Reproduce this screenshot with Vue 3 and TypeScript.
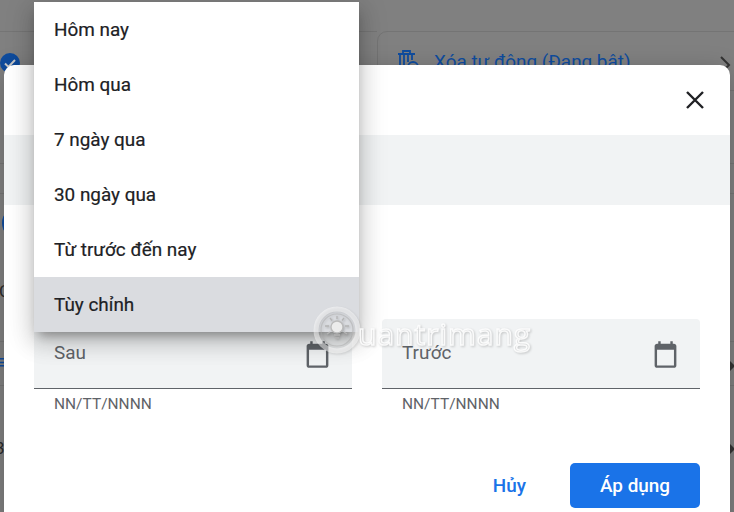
<script setup lang="ts">
const options = [
  { label: 'Hôm nay', active: false },
  { label: 'Hôm qua', active: false },
  { label: '7 ngày qua', active: false },
  { label: '30 ngày qua', active: false },
  { label: 'Từ trước đến nay', active: false },
  { label: 'Tùy chỉnh', active: true },
]
const fields = ['Sau', 'Trước']
</script>

<template>
  <div class="page">
    <div class="backdrop">
      <div class="bg-line l1"></div>
      <div class="bg-line l2"></div>
      <div class="bg-line l3"></div>
      <div class="bg-line l4"></div>
      <div class="bg-line l5"></div>
      <div class="bg-check">
        <svg viewBox="0 0 20 20" width="20" height="20"><circle cx="10" cy="10" r="10" fill="#0f4c9e" /><path d="M5 10.500l3.400 3.400L15 7" fill="none" stroke="#ccc" stroke-width="2" /></svg>
      </div>
      <div class="bg-dot-blue"></div>
      <span class="bg-glyph g1">C</span>
      <span class="bg-glyph g2">≡</span>
      <span class="bg-glyph g3">3</span>
      <span class="bg-tri t1"></span>
      <span class="bg-tri t2"></span>
      <div class="bg-card">
        <svg class="bg-trash" viewBox="0 0 24 24" width="24" height="24" fill="none" stroke="#0f4c9e" stroke-width="1.800"><path d="M2 5h17M7 5V2h7v3M4 5v16h6M8 5v14M12 5v8M16 5v6" /><circle cx="17" cy="18" r="5" /></svg>
        <span class="bg-card-text">Xóa tự động (Đang bật)</span>
        <svg class="bg-chevron" viewBox="0 0 12 20" width="12" height="20" fill="none" stroke="#333" stroke-width="2"><path d="M2 2l8 8-8 8" /></svg>
      </div>
    </div>

    <section class="dialog">
      <header class="dialog-head">
        <svg class="close" viewBox="0 0 20 20" width="20" height="20" fill="none" stroke="#202124" stroke-width="2.400"><path d="M2 2l16 16M18 2L2 18" /></svg>
      </header>
      <div class="dialog-band"></div>
      <div class="fields">
        <div v-for="f in fields" :key="f" class="field">
          <div class="input">
            <span class="input-label">{{ f }}</span>
            <svg viewBox="0 0 24 24" width="29" height="29" fill="#5f6368"><path d="M19 3h-1V1h-2v2H8V1H6v2H5C3.900 3 3 3.900 3 5v16c0 1.100.9 2 2 2h14c1.100 0 2-.9 2-2V5c0-1.100-.9-2-2-2zm0 18H5V8h14v13z" /></svg>
          </div>
          <div class="hint">NN/TT/NNNN</div>
        </div>
      </div>
      <footer class="actions">
        <button class="btn-text">Hủy</button>
        <button class="btn-primary">Áp dụng</button>
      </footer>
    </section>

    <ul class="menu">
      <li v-for="o in options" :key="o.label" class="menu-item" :class="{ active: o.active }">{{ o.label }}</li>
    </ul>

    <div class="watermark">
      <svg viewBox="0 0 48 48" width="48" height="48" fill="none">
        <circle cx="24" cy="24" r="21" stroke="#fff" stroke-opacity=".5" stroke-width="5" />
        <circle cx="24" cy="24" r="16" stroke="#aaa" stroke-opacity=".5" stroke-width="1.200" />
        <circle cx="24" cy="21" r="6" stroke="#bbb" fill="#ececec" stroke-width="1.300" />
        <path d="M21 29h6M22 32h4M24 10v3M31 12l-2 2.500M17 12l2 2.500M36 20h-4M12 20h4M34 28l-3-2M14 28l3-2" stroke="#b4b4b4" stroke-width="1.300" />
      </svg>
      <span class="wm-text">uantrimang</span>
    </div>
  </div>
</template>

<style>
html, body { margin: 0; background: #808080; overflow: hidden; }
</style>

<style scoped>
.page {
  position: relative;
  width: 734px;
  height: 512px;
  overflow: hidden;
  font-family: Roboto, "Noto Sans", sans-serif;
  background: #808080;
}
.backdrop { position: absolute; inset: 0; }
.bg-line { position: absolute; left: 0; width: 734px; height: 1px; background: #757575; }
.l1 { top: 31px; width: 377px; }
.l2 { top: 163px; }
.l3 { top: 193px; }
.l4 { top: 341px; }
.l5 { top: 385px; }
.bg-check { position: absolute; left: 0; top: 53px; }
.bg-dot-blue { position: absolute; left: 2px; top: 214px; width: 8px; height: 18px; border-radius: 50%; background: #0f4c9e; }
.bg-glyph { position: absolute; left: -5px; font-size: 17px; line-height: 20px; color: #2a2a2a; }
.g1 { top: 281px; left: -1px; }
.g2 { top: 352px; left: -4px; color: #0f4c9e; font-size: 20px; }
.g3 { top: 438px; left: -5px; }
.bg-tri { position: absolute; left: 730px; width: 0; height: 0; border-top: 5px solid transparent; border-bottom: 5px solid transparent; border-left: 5px solid #333; }
.t1 { top: 361px; }
.t2 { top: 444px; }
.bg-card {
  position: absolute;
  left: 377px;
  top: 31px;
  width: 380px;
  height: 60px;
  box-sizing: border-box;
  border: 1px solid #747474;
  border-radius: 10px;
  display: flex;
  align-items: center;
  gap: 14px;
  padding: 0 18px;
}
.bg-trash { flex: none; }
.bg-card-text { color: #0f4c9e; font-size: 18.900px; white-space: nowrap; }
.bg-chevron { position: absolute; left: 341px; top: 23px; }

.dialog {
  position: absolute;
  left: 4px;
  top: 65px;
  width: 726px;
  height: 470px;
  background: #fff;
  border-radius: 10px;
  box-shadow: 0 6px 26px rgba(0, 0, 0, .22);
  display: flex;
  flex-direction: column;
}
.dialog-head {
  height: 70px;
  display: flex;
  align-items: center;
  justify-content: flex-end;
  padding-right: 25px;
  flex: none;
}
.dialog-band { height: 70px; background: #f1f3f4; flex: none; }
.fields {
  margin-top: 114px;
  padding: 0 30px;
  display: flex;
  gap: 30px;
}
.field { width: 318px; }
.input {
  height: 70px;
  box-sizing: border-box;
  background: #f1f3f4;
  border-bottom: 1px solid #5f6368;
  border-radius: 4px 4px 0 0;
  display: flex;
  align-items: flex-end;
  justify-content: space-between;
  padding: 0 20px 19px 20px;
}
.input-label { color: #5f6368; font-size: 18.900px; line-height: 28px; margin-bottom: 2px; }
.hint { color: #5f6368; font-size: 15.500px; line-height: 20px; padding: 5px 0 0 20px; }
.actions {
  margin-top: 49px;
  padding: 0 30px;
  display: flex;
  justify-content: flex-end;
  align-items: center;
  gap: 30px;
}
.btn-text, .btn-primary {
  font-family: inherit;
  font-size: 18.900px;
  font-weight: 500;
  border: 0;
  padding: 0;
}
.btn-text { background: none; color: #1a73e8; width: 70px; text-align: right; padding-right: 14px; box-sizing: border-box; }
.btn-primary { background: #1a73e8; color: #fff; width: 130px; height: 45px; border-radius: 5px; }

.menu {
  position: absolute;
  left: 34px;
  top: 2px;
  width: 325px;
  margin: 0;
  padding: 0;
  list-style: none;
  background: #fff;
  box-shadow: 0 8px 10px -5px rgba(0, 0, 0, .32), 0 12px 20px 2px rgba(0, 0, 0, .12), 0 4px 26px 4px rgba(0, 0, 0, .12);
}
.menu-item {
  height: 55px;
  padding-left: 20px;
  display: flex;
  align-items: center;
  font-size: 18.900px;
  color: #202124;
  -webkit-text-stroke: .2px #202124;
}
.menu-item.active { background: #dadce0; }

.watermark {
  position: absolute;
  left: 313px;
  top: 306px;
  display: flex;
  align-items: center;
  filter: drop-shadow(1px 1px 1px rgba(0, 0, 0, .22));
}
.wm-text {
  font-family: "Open Sans", sans-serif;
  font-size: 30px;
  letter-spacing: 1px;
  color: rgba(255, 255, 255, .15);
  -webkit-text-stroke: 1.500px rgba(255, 255, 255, .85);
  line-height: 36px;
  margin: 8px 0 0 -3px;
}
</style>
